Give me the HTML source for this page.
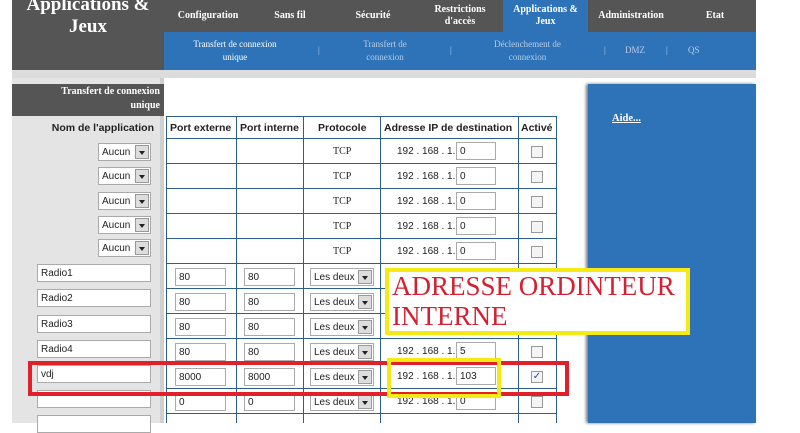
<!DOCTYPE html>
<html><head><meta charset="utf-8"><style>
*{margin:0;padding:0;box-sizing:border-box}
body{width:800px;height:423px;overflow:hidden;background:#fff;position:relative;font-family:"Liberation Sans",sans-serif}
.a{position:absolute}
.ser{font-family:"Liberation Serif",serif;font-weight:bold}
.tab{position:absolute;top:0;height:32px;color:#fff;font-size:10px;display:flex;align-items:center;justify-content:center;text-align:center;line-height:12px}
.sub{position:absolute;top:38px;color:#b9cde8;font-size:9px;font-family:"Liberation Serif",serif;text-align:center;line-height:13px}
.vl{position:absolute;top:0;width:1px;background:#2e5f8c}
.hl{position:absolute;left:166px;width:390px;height:1px;background:#2e5f8c}
.th{position:absolute;top:122px;font-size:10.5px;font-weight:bold;color:#222}
.inp{position:absolute;height:18px;border:1px solid #aaa;background:#fff;font-size:10px;padding:3px 0 0 3px;color:#222}
.sel{position:absolute;height:18px;border:1px solid #aaa;background:#fff;font-size:10px;padding:3px 0 0 3px;color:#222}
.sel i{position:absolute;right:1px;top:1px;width:14px;height:14px;background:#ddd;border:1px solid #999}
.sel i:after{content:"";position:absolute;left:3px;top:5px;border-left:3px solid transparent;border-right:3px solid transparent;border-top:4px solid #222}
.ip{position:absolute;left:397px;font-size:10px;color:#222}
.cb{position:absolute;left:531px;width:12px;height:12px;border:1px solid #999;background:#f4f4f4}
.tcp{position:absolute;left:333px;font-size:10px;color:#222;font-family:"Liberation Serif",serif}
</style></head><body>
<div class="a" style="left:12px;top:0;width:152px;height:70px;background:#555"></div>
<div class="a ser" style="left:12px;top:-6px;width:152px;text-align:center;color:#fff;font-size:19px;line-height:22px">Applications &amp;<br>Jeux</div>
<div class="a" style="left:164px;top:0;width:592px;height:32px;background:#555"></div>
<div class="a" style="left:503px;top:0;width:85px;height:32px;background:#2e72b8"></div>
<div class="tab ser" style="left:164px;width:88px">Configuration</div>
<div class="tab ser" style="left:258px;width:64px">Sans fil</div>
<div class="tab ser" style="left:340px;width:66px">Sécurité</div>
<div class="tab ser" style="left:420px;width:80px">Restrictions<br>d'accès</div>
<div class="tab ser" style="left:503px;width:85px">Applications &amp;<br>Jeux</div>
<div class="tab ser" style="left:588px;width:86px">Administration</div>
<div class="tab ser" style="left:690px;width:50px">Etat</div>
<div class="a" style="left:164px;top:32px;width:592px;height:38px;background:#2e72b8"></div>
<div class="sub" style="left:180px;width:110px;color:#fff">Transfert de connexion<br>unique</div>
<div class="sub" style="left:318px;top:44px">|</div>
<div class="sub" style="left:340px;width:90px">Transfert de<br>connexion</div>
<div class="sub" style="left:450px;top:44px">|</div>
<div class="sub" style="left:480px;width:95px">Déclenchement de<br>connexion</div>
<div class="sub" style="left:604px;top:44px">|</div>
<div class="sub" style="left:625px;top:44px">DMZ</div>
<div class="sub" style="left:666px;top:44px">|</div>
<div class="sub" style="left:688px;top:44px">QS</div>
<div class="a" style="left:12px;top:70px;width:744px;height:8px;background:#dcdcdc"></div>
<div class="a" style="left:12px;top:78px;width:152px;height:345px;background:#e4e4e4"></div>
<div class="a" style="left:160px;top:78px;width:4px;height:345px;background:#cfcfcf"></div>
<div class="a" style="left:12px;top:84px;width:152px;height:32px;background:#555"></div>
<div class="a ser" style="left:12px;top:85px;width:148px;text-align:right;color:#fff;font-size:10px;line-height:14px">Transfert de connexion<br>unique</div>
<div class="a" style="left:12px;top:122px;width:142px;text-align:right;font-size:10.5px;font-weight:bold;color:#222">Nom de l'application</div>
<div class="a" style="left:588px;top:84px;width:168px;height:339px;background:#2e72b8;box-shadow:-2px 0 3px #777"></div>
<div class="a ser" style="left:612px;top:113px;color:#fff;font-size:10.5px;text-decoration:underline">Aide...</div>
<div class="hl" style="top:116px"></div>
<div class="hl" style="top:138px"></div><div class="hl" style="top:163px"></div><div class="hl" style="top:188px"></div><div class="hl" style="top:213px"></div><div class="hl" style="top:238px"></div><div class="hl" style="top:263px"></div><div class="hl" style="top:288px"></div><div class="hl" style="top:313px"></div><div class="hl" style="top:338px"></div><div class="hl" style="top:363px"></div><div class="hl" style="top:388px"></div><div class="hl" style="top:413px"></div>
<div class="vl" style="left:166px;top:116px;height:307px"></div>
<div class="vl" style="left:236px;top:116px;height:307px"></div>
<div class="vl" style="left:303px;top:116px;height:307px"></div>
<div class="vl" style="left:380px;top:116px;height:307px"></div>
<div class="vl" style="left:518px;top:116px;height:307px"></div>
<div class="vl" style="left:556px;top:116px;height:307px"></div>
<div class="th" style="left:170px">Port externe</div>
<div class="th" style="left:240px">Port interne</div>
<div class="th" style="left:318px">Protocole</div>
<div class="th" style="left:384px">Adresse IP de destination</div>
<div class="th" style="left:521px">Activé</div>
<div class="sel" style="left:98px;top:143px;width:53px">Aucun<i></i></div>
<div class="sel" style="left:98px;top:167px;width:53px">Aucun<i></i></div>
<div class="sel" style="left:98px;top:192px;width:53px">Aucun<i></i></div>
<div class="sel" style="left:98px;top:216px;width:53px">Aucun<i></i></div>
<div class="sel" style="left:98px;top:239px;width:53px">Aucun<i></i></div>
<div class="tcp" style="top:146px">TCP</div><div class="tcp" style="top:171px">TCP</div><div class="tcp" style="top:196px">TCP</div><div class="tcp" style="top:221px">TCP</div><div class="tcp" style="top:246px">TCP</div>
<div class="ip" style="top:146px">192 . 168 . 1.</div><div class="inp" style="left:456px;top:142px;width:40px">0</div>
<div class="ip" style="top:171px">192 . 168 . 1.</div><div class="inp" style="left:456px;top:167px;width:40px">0</div>
<div class="ip" style="top:196px">192 . 168 . 1.</div><div class="inp" style="left:456px;top:192px;width:40px">0</div>
<div class="ip" style="top:221px">192 . 168 . 1.</div><div class="inp" style="left:456px;top:217px;width:40px">0</div>
<div class="ip" style="top:246px">192 . 168 . 1.</div><div class="inp" style="left:456px;top:242px;width:40px">0</div>
<div class="cb" style="top:146px"></div><div class="cb" style="top:171px"></div><div class="cb" style="top:196px"></div><div class="cb" style="top:221px"></div><div class="cb" style="top:246px"></div>
<div class="inp" style="left:37px;top:264px;width:114px">Radio1</div>
<div class="inp" style="left:37px;top:289px;width:114px">Radio2</div>
<div class="inp" style="left:37px;top:315px;width:114px">Radio3</div>
<div class="inp" style="left:37px;top:340px;width:114px">Radio4</div>
<div class="inp" style="left:37px;top:365px;width:114px">vdj</div>
<div class="inp" style="left:37px;top:390px;width:114px"></div>
<div class="inp" style="left:37px;top:415px;width:114px"></div>
<div class="inp" style="left:175px;top:268px;width:51px">80</div><div class="inp" style="left:244px;top:268px;width:51px">80</div><div class="sel" style="left:310px;top:268px;width:64px">Les deux<i></i></div>
<div class="inp" style="left:175px;top:293px;width:51px">80</div><div class="inp" style="left:244px;top:293px;width:51px">80</div><div class="sel" style="left:310px;top:293px;width:64px">Les deux<i></i></div>
<div class="inp" style="left:175px;top:318px;width:51px">80</div><div class="inp" style="left:244px;top:318px;width:51px">80</div><div class="sel" style="left:310px;top:318px;width:64px">Les deux<i></i></div>
<div class="inp" style="left:175px;top:343px;width:51px">80</div><div class="inp" style="left:244px;top:343px;width:51px">80</div><div class="sel" style="left:310px;top:343px;width:64px">Les deux<i></i></div>
<div class="inp" style="left:175px;top:368px;width:51px">8000</div><div class="inp" style="left:244px;top:368px;width:51px">8000</div><div class="sel" style="left:310px;top:368px;width:64px">Les deux<i></i></div>
<div class="inp" style="left:175px;top:393px;width:51px">0</div><div class="inp" style="left:244px;top:393px;width:51px">0</div><div class="sel" style="left:310px;top:393px;width:64px">Les deux<i></i></div>
<div class="ip" style="top:346px">192 . 168 . 1.</div><div class="inp" style="left:456px;top:342px;width:40px">5</div>
<div class="ip" style="top:371px">192 . 168 . 1.</div><div class="inp" style="left:456px;top:367px;width:40px">103</div>
<div class="ip" style="top:396px">192 . 168 . 1.</div><div class="inp" style="left:456px;top:392px;width:40px">0</div>
<div class="cb" style="top:346px"></div>
<div class="cb" style="top:371px;font-size:10px;color:#2a4aa0;line-height:10px;text-align:center">✓</div>
<div class="cb" style="top:396px"></div>
<div class="a" style="left:385px;top:268px;width:305px;height:67px;background:#fff;border:4px solid #f5ea14"></div>
<div class="a" style="left:392px;top:271px;color:#d42030;font-family:'Liberation Serif',serif;font-size:27px;line-height:30px">ADRESSE ORDINTEUR<br>INTERNE</div>
<div class="a" style="left:28px;top:361px;width:541px;height:35px;border:4px solid #e0202a"></div>
<div class="a" style="left:387px;top:358px;width:114px;height:40px;border:4px solid #f5ea14"></div>
</body></html>
